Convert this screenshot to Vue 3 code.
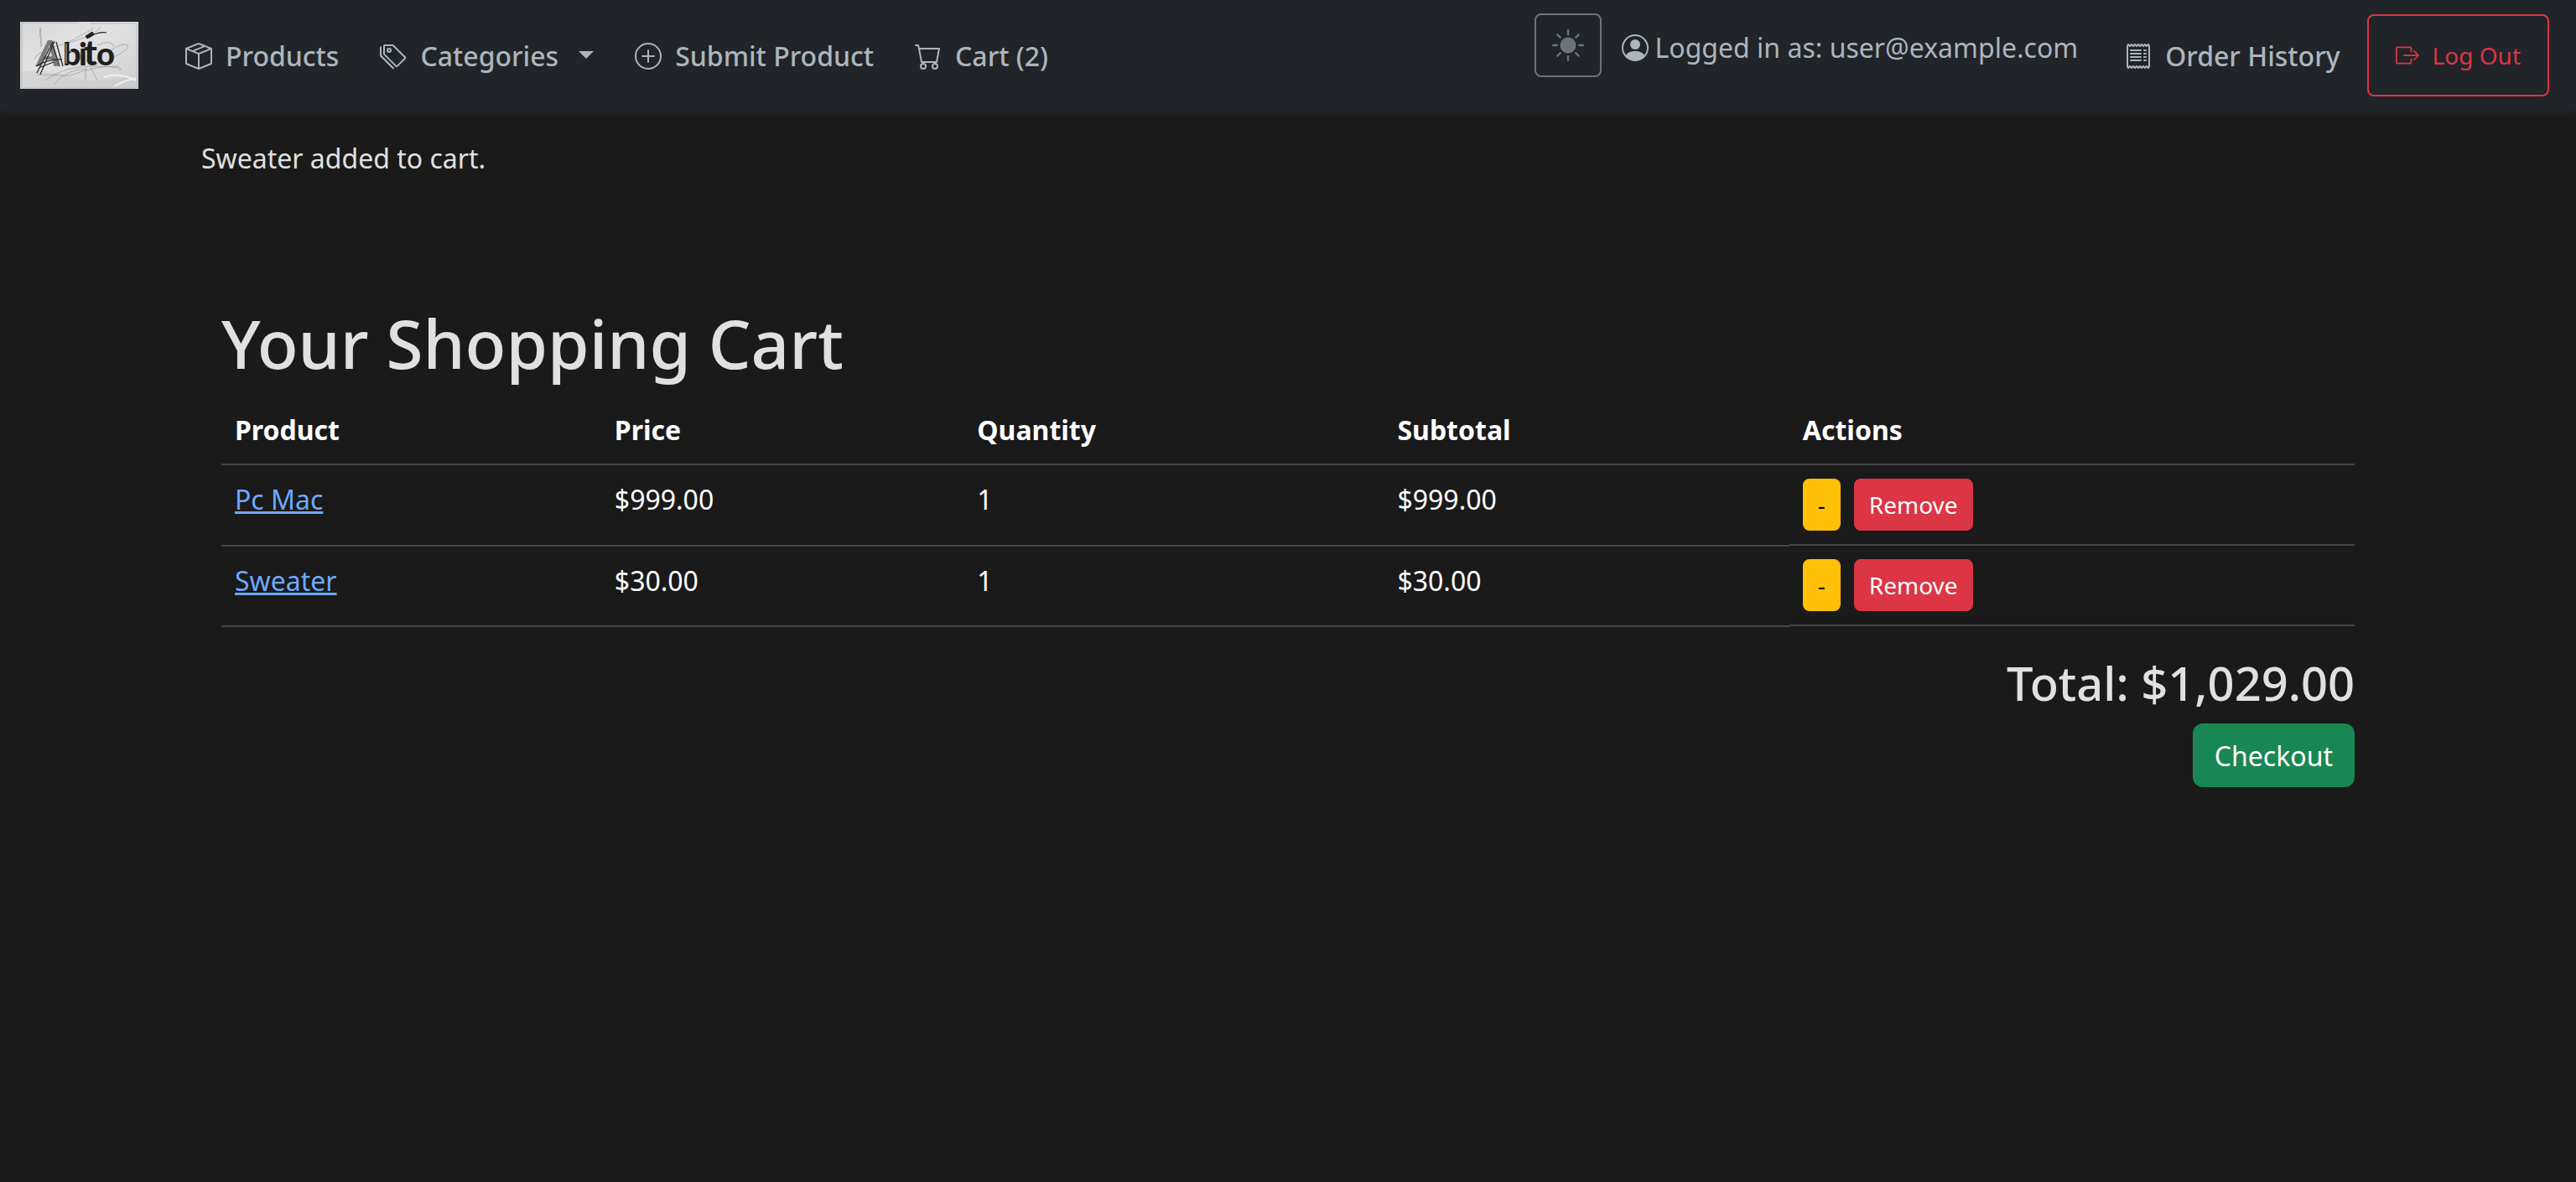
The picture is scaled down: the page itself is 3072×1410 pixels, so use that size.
<script setup>
import { computed, ref } from 'vue'

const message = ref('Sweater added to cart.')
const items = ref([
  { id: 1, name: 'Pc Mac', price: 999, quantity: 1 },
  { id: 2, name: 'Sweater', price: 30, quantity: 1 },
])

const count = computed(() => items.value.reduce((n, i) => n + i.quantity, 0))
const total = computed(() => items.value.reduce((n, i) => n + i.price * i.quantity, 0))

const money = (n) =>
  '$' + n.toLocaleString('en-US', { minimumFractionDigits: 2, maximumFractionDigits: 2 })

function remove(item) {
  items.value = items.value.filter((i) => i.id !== item.id)
}
function decrease(item) {
  if (item.quantity > 1) item.quantity -= 1
  else remove(item)
}
</script>

<template>
  <header class="navbar">
    <a class="brand" href="#" aria-label="Abito">
      <svg class="logo" viewBox="0 0 141 80">
        <defs>
          <linearGradient id="paper" x1="0" y1="0" x2="1" y2="1">
            <stop offset="0" stop-color="#d6d6d6" />
            <stop offset="0.4" stop-color="#e2e2e2" />
            <stop offset="1" stop-color="#cfcfcf" />
          </linearGradient>
        </defs>
        <rect width="141" height="80" fill="url(#paper)" />
        <path d="M0 60 Q30 56 60 66 T141 62 V80 H0Z" fill="#c6c6c6" opacity=".4" />
        <path d="M112 77 Q124 70 139 67 M100 66 Q118 60 139 70" fill="none" stroke="#eeeeee" stroke-width="2" />
        <path d="M2 1 V79 M139 2 V79 M2 1 H70 M84 2 H139 M4 79 H139" fill="none" stroke="#bbbbbb" stroke-width="1" />
        <g fill="none" stroke="#8f8f8f" stroke-width="0.6">
          <path d="M24 7 V18 L25 20 V30" stroke="#555" />
          <path d="M17 44 Q22 34 54 26 T96 7" />
          <path d="M54 26 Q78 14 88 7" />
          <path d="M108 34 Q124 24 128 28 T108 44" />
          <path d="M20 63 L60 64 Q90 52 118 53" />
          <path d="M30 70 Q52 52 90 53 T118 58" />
          <path d="M40 75 Q56 56 80 56 M78 56 V70 M84 54 L92 70" />
          <path d="M92 28 Q110 20 112 30" />
        </g>
        <text class="sketch" y="52" fill="#1f1f1f">
          <tspan x="51">b</tspan><tspan x="70">i</tspan><tspan class="tall" x="76">t</tspan><tspan x="91">o</tspan>
        </text>
        <text class="cap" x="20" y="53" fill="#7a7a7a">A</text>
        <path d="M41 23 L24 63 M39 24 L20 61 M43 24 L51 53 M39 28 L47 53 M19 53 Q34 44 50 45 M22 55 L40 48" fill="none" stroke="#2c2c2c" stroke-width="1.3" />
        <path d="M55 26 V50 M58 34 Q66 36 64 46" fill="none" stroke="#c8c8c8" stroke-width="1" />
        <path d="M78 17 L86 12 L88 15 L80 20Z" fill="#222" stroke="#222" stroke-width="1" />
        <path d="M82 19 Q92 11 103 13" fill="none" stroke="#222" stroke-width="1.2" />
      </svg>
    </a>

    <nav class="links" aria-label="Main">
      <a class="link" href="#">
        <svg class="icon" viewBox="0 0 16 16"><path d="M8.186 1.113a.5.5 0 0 0-.372 0L1.846 3.5l2.404.961L10.404 2zm3.564 1.426L5.596 5 8 5.961 14.154 3.5zm3.25 1.7-6.5 2.6v7.922l6.5-2.6V4.24zM7.5 14.762V6.838L1 4.239v7.923zM7.443.184a1.5 1.5 0 0 1 1.114 0l7.129 2.852A.5.5 0 0 1 16 3.5v8.662a1 1 0 0 1-.629.928l-7.185 2.874a.5.5 0 0 1-.372 0L.63 13.09a1 1 0 0 1-.63-.928V3.5a.5.5 0 0 1 .314-.464z" /></svg>
        Products
      </a>
      <a class="link" href="#">
        <svg class="icon" viewBox="0 0 16 16"><path d="M3 2v4.586l7 7L14.586 9l-7-7zM2 2a1 1 0 0 1 1-1h4.586a1 1 0 0 1 .707.293l7 7a1 1 0 0 1 0 1.414l-4.586 4.586a1 1 0 0 1-1.414 0l-7-7A1 1 0 0 1 2 6.586z" /><path d="M5.5 5a.5.5 0 1 1 0-1 .5.5 0 0 1 0 1m0 1a1.5 1.5 0 1 0 0-3 1.5 1.5 0 0 0 0 3M1 7.086a1 1 0 0 0 .293.707L8.75 15.25l-.043.043a1 1 0 0 1-1.414 0l-7-7A1 1 0 0 1 0 7.586V3a1 1 0 0 1 1-1z" /></svg>
        Categories
        <span class="caret"></span>
      </a>
      <a class="link" href="#">
        <svg class="icon" viewBox="0 0 16 16"><path d="M8 15A7 7 0 1 1 8 1a7 7 0 0 1 0 14m0 1A8 8 0 1 0 8 0a8 8 0 0 0 0 16" /><path d="M8 4a.5.5 0 0 1 .5.5v3h3a.5.5 0 0 1 0 1h-3v3a.5.5 0 0 1-1 0v-3h-3a.5.5 0 0 1 0-1h3v-3A.5.5 0 0 1 8 4" /></svg>
        Submit Product
      </a>
      <a class="link" href="#">
        <svg class="icon" viewBox="0 0 16 16"><path d="M0 1.5A.5.5 0 0 1 .5 1H2a.5.5 0 0 1 .485.379L2.89 3H14.5a.5.5 0 0 1 .491.592l-1.5 8A.5.5 0 0 1 13 12H4a.5.5 0 0 1-.491-.408L2.01 3.607 1.61 2H.5a.5.5 0 0 1-.5-.5M3.102 4l1.313 7h8.17l1.313-7zM5 12a2 2 0 1 0 0 4 2 2 0 0 0 0-4m7 0a2 2 0 1 0 0 4 2 2 0 0 0 0-4m-7 1a1 1 0 1 1 0 2 1 1 0 0 1 0-2m7 0a1 1 0 1 1 0 2 1 1 0 0 1 0-2" /></svg>
        Cart ({{ count }})
      </a>
    </nav>

    <div class="account">
      <button class="theme" type="button" aria-label="Toggle theme">
        <svg class="sun" viewBox="0 0 16 16"><path d="M8 12a4 4 0 1 0 0-8 4 4 0 0 0 0 8M8 0a.5.5 0 0 1 .5.5v2a.5.5 0 0 1-1 0v-2A.5.5 0 0 1 8 0m0 13a.5.5 0 0 1 .5.5v2a.5.5 0 0 1-1 0v-2A.5.5 0 0 1 8 13m8-5a.5.5 0 0 1-.5.5h-2a.5.5 0 0 1 0-1h2a.5.5 0 0 1 .5.5M3 8a.5.5 0 0 1-.5.5h-2a.5.5 0 0 1 0-1h2A.5.5 0 0 1 3 8m10.657-5.657a.5.5 0 0 1 0 .707l-1.414 1.415a.5.5 0 1 1-.707-.708l1.414-1.414a.5.5 0 0 1 .707 0m-9.193 9.193a.5.5 0 0 1 0 .707L3.05 13.657a.5.5 0 0 1-.707-.707l1.414-1.414a.5.5 0 0 1 .707 0m9.193 2.121a.5.5 0 0 1-.707 0l-1.414-1.414a.5.5 0 0 1 .707-.707l1.414 1.414a.5.5 0 0 1 0 .707M4.464 4.465a.5.5 0 0 1-.707 0L2.343 3.05a.5.5 0 1 1 .707-.707l1.414 1.414a.5.5 0 0 1 0 .708" /></svg>
      </button>
      <span class="user">
        <svg class="icon" viewBox="0 0 16 16"><path d="M11 6a3 3 0 1 1-6 0 3 3 0 0 1 6 0" /><path fill-rule="evenodd" d="M0 8a8 8 0 1 1 16 0A8 8 0 0 1 0 8m8-7a7 7 0 0 0-5.468 11.37C3.242 11.226 4.805 10 8 10s4.757 1.225 5.468 2.37A7 7 0 0 0 8 1" /></svg>
        Logged in as: user@example.com
      </span>
      <a class="link history" href="#">
        <svg class="icon" viewBox="0 0 16 16"><path d="M1.92.506a.5.5 0 0 1 .434.14L3 1.293l.646-.647a.5.5 0 0 1 .708 0L5 1.293l.646-.647a.5.5 0 0 1 .708 0L7 1.293l.646-.647a.5.5 0 0 1 .708 0L9 1.293l.646-.647a.5.5 0 0 1 .708 0l.646.647.646-.647a.5.5 0 0 1 .708 0l.646.647.646-.647a.5.5 0 0 1 .801.13l.5 1A.5.5 0 0 1 15 2v12a.5.5 0 0 1-.053.224l-.5 1a.5.5 0 0 1-.8.13L13 14.707l-.646.647a.5.5 0 0 1-.708 0L11 14.707l-.646.647a.5.5 0 0 1-.708 0L9 14.707l-.646.647a.5.5 0 0 1-.708 0L7 14.707l-.646.647a.5.5 0 0 1-.708 0L5 14.707l-.646.647a.5.5 0 0 1-.708 0L3 14.707l-.646.647a.5.5 0 0 1-.801-.13l-.5-1A.5.5 0 0 1 1 14V2a.5.5 0 0 1 .053-.224l.5-1a.5.5 0 0 1 .367-.27m.217 1.338L2 2.118v11.764l.137.274.51-.51a.5.5 0 0 1 .707 0l.646.647.646-.646a.5.5 0 0 1 .708 0l.646.646.646-.646a.5.5 0 0 1 .708 0l.646.646.646-.646a.5.5 0 0 1 .708 0l.646.646.646-.646a.5.5 0 0 1 .708 0l.646.646.646-.646a.5.5 0 0 1 .708 0l.509.509.137-.274V2.118l-.137-.274-.51.51a.5.5 0 0 1-.707 0L12 1.707l-.646.647a.5.5 0 0 1-.708 0L10 1.707l-.646.647a.5.5 0 0 1-.708 0L8 1.707l-.646.647a.5.5 0 0 1-.708 0L6 1.707l-.646.647a.5.5 0 0 1-.708 0L4 1.707l-.646.647a.5.5 0 0 1-.708 0z" /><path d="M3 4.5a.5.5 0 0 1 .5-.5h6a.5.5 0 1 1 0 1h-6a.5.5 0 0 1-.5-.5m0 2a.5.5 0 0 1 .5-.5h6a.5.5 0 1 1 0 1h-6a.5.5 0 0 1-.5-.5m0 2a.5.5 0 0 1 .5-.5h6a.5.5 0 1 1 0 1h-6a.5.5 0 0 1-.5-.5m0 2a.5.5 0 0 1 .5-.5h6a.5.5 0 0 1 0 1h-6a.5.5 0 0 1-.5-.5m8-6a.5.5 0 0 1 .5-.5h1a.5.5 0 0 1 0 1h-1a.5.5 0 0 1-.5-.5m0 2a.5.5 0 0 1 .5-.5h1a.5.5 0 0 1 0 1h-1a.5.5 0 0 1-.5-.5m0 2a.5.5 0 0 1 .5-.5h1a.5.5 0 0 1 0 1h-1a.5.5 0 0 1-.5-.5m0 2a.5.5 0 0 1 .5-.5h1a.5.5 0 0 1 0 1h-1a.5.5 0 0 1-.5-.5" /></svg>
        Order History
      </a>
      <button class="logout" type="button">
        <svg class="icon" viewBox="0 0 16 16"><path fill-rule="evenodd" d="M10 12.5a.5.5 0 0 1-.5.5h-8a.5.5 0 0 1-.5-.5v-9a.5.5 0 0 1 .5-.5h8a.5.5 0 0 1 .5.5v2a.5.5 0 0 0 1 0v-2A1.5 1.5 0 0 0 9.5 2h-8A1.5 1.5 0 0 0 0 3.5v9A1.5 1.5 0 0 0 1.5 14h8a1.5 1.5 0 0 0 1.5-1.5v-2a.5.5 0 0 0-1 0z" /><path fill-rule="evenodd" d="M15.854 8.354a.5.5 0 0 0 0-.708l-3-3a.5.5 0 0 0-.708.708L14.293 7.5H5.5a.5.5 0 0 0 0 1h8.793l-2.147 2.146a.5.5 0 0 0 .708.708z" /></svg>
        Log Out
      </button>
    </div>
  </header>

  <main class="container">
    <p class="message" role="status">{{ message }}</p>

    <section class="cart">
      <h1>Your Shopping Cart</h1>
      <table>
        <colgroup>
          <col class="col-product" />
          <col class="col-price" />
          <col class="col-quantity" />
          <col class="col-subtotal" />
          <col />
        </colgroup>
        <thead>
          <tr>
            <th scope="col">Product</th>
            <th scope="col">Price</th>
            <th scope="col">Quantity</th>
            <th scope="col">Subtotal</th>
            <th scope="col">Actions</th>
          </tr>
        </thead>
        <tbody>
          <tr v-for="item in items" :key="item.id">
            <td><a href="#">{{ item.name }}</a></td>
            <td>{{ money(item.price) }}</td>
            <td>{{ item.quantity }}</td>
            <td>{{ money(item.price * item.quantity) }}</td>
            <td class="actions">
              <button class="small warning" type="button" @click="decrease(item)">-</button>
              <button class="small danger" type="button" @click="remove(item)">Remove</button>
            </td>
          </tr>
        </tbody>
      </table>
      <div class="summary">
        <h3>Total: {{ money(total) }}</h3>
        <button class="checkout" type="button">Checkout</button>
      </div>
    </section>
  </main>
</template>

<style>
body {
  margin: 0;
  background: #1a1a1a;
}
</style>

<style scoped>
.navbar,
.container {
  font-family: 'Noto Sans', sans-serif;
  font-size: 32px;
  line-height: 48px;
}

button {
  font-family: inherit;
  cursor: pointer;
}

.navbar {
  display: flex;
  align-items: center;
  min-height: 100px;
  padding: 16px 32px 16px 24px;
  background: #212529;
  color: #adb5bd;
  box-shadow: 0 4px 8px rgba(255, 255, 255, 0.05);
}

.brand {
  display: flex;
  margin-right: 32px;
}

.logo {
  width: 141px;
  height: 80px;
}

.sketch {
  font-family: 'Lato', sans-serif;
  font-size: 38px;
  font-weight: 900;
}

.tall {
  font-size: 42px;
}

.cap {
  font-family: 'Lato', sans-serif;
  font-size: 42px;
  font-style: italic;
  font-weight: 700;
}

.icon {
  flex: none;
  width: 32px;
  height: 32px;
  fill: currentColor;
}

.links {
  display: flex;
}

.link {
  display: flex;
  align-items: center;
  gap: 16px;
  padding: 18px 25px 16px 24px;
  color: inherit;
  font-weight: 500;
  text-decoration: none;
  white-space: nowrap;
}

.caret {
  margin: -3px 0 0 8px;
  border: 9px solid transparent;
  border-top-color: currentColor;
  border-bottom: 0;
}

.account {
  display: flex;
  align-items: flex-start;
  min-height: 100px;
  margin-left: auto;
}

.theme {
  display: flex;
  padding: 17px 19px;
  border: 2px solid #6c757d;
  border-radius: 8px;
  background: none;
  color: #6c757d;
}

.sun {
  width: 38px;
  height: 38px;
  fill: currentColor;
}

.user {
  display: flex;
  align-items: center;
  gap: 8px;
  padding: 17px 24px;
  white-space: nowrap;
}

.history {
  align-self: center;
  padding-right: 32px;
  padding-left: 32px;
}

.logout {
  display: flex;
  align-self: center;
  align-items: center;
  gap: 16px;
  padding: 26px 32px;
  border: 2px solid #dc3545;
  border-radius: 8px;
  background: none;
  color: #dc3545;
  font-size: 28px;
  line-height: 42px;
  white-space: nowrap;
}

.logout .icon {
  width: 28px;
  height: 28px;
}

.container {
  box-sizing: border-box;
  max-width: 2640px;
  margin: 0 auto;
  padding: 33px 24px;
  color: #e0e0e0;
}

.message {
  margin: 0;
}

.cart {
  margin-top: 147px;
  padding: 0 24px;
}

h1,
h3 {
  margin: 0 0 14px;
  font-weight: 500;
}

h1 {
  font-size: 80px;
  line-height: 98px;
}

h3 {
  font-size: 56px;
  line-height: 69px;
}

table {
  width: 100%;
  border-collapse: collapse;
  color: #fff;
  text-align: left;
}

.col-product {
  width: 17.8%;
}

.col-price {
  width: 17%;
}

.col-quantity {
  width: 19.7%;
}

.col-subtotal {
  width: 19%;
}

thead tr {
  height: 82px;
}

tbody tr {
  height: 96px;
}

th,
td {
  padding: 17px 16px 15px;
  border-bottom: 2px solid #444;
  vertical-align: top;
}

td a {
  color: #6ea8fe;
}

.actions {
  display: flex;
  gap: 16px;
  padding: 16px;
}

.small,
.checkout {
  color: #fff;
}

.small {
  padding: 8px 16px;
  border: 2px solid transparent;
  border-radius: 8px;
  font-size: 28px;
  line-height: 42px;
}

.warning {
  border-color: #ffc107;
  background: #ffc107;
  color: #000;
}

.danger {
  border-color: #dc3545;
  background: #dc3545;
}

.summary {
  margin-top: 32px;
  text-align: right;
}

.checkout {
  padding: 13px 24px 11px;
  border: 2px solid #198754;
  border-radius: 12px;
  background: #198754;
  font-size: 32px;
  line-height: 48px;
}
</style>
